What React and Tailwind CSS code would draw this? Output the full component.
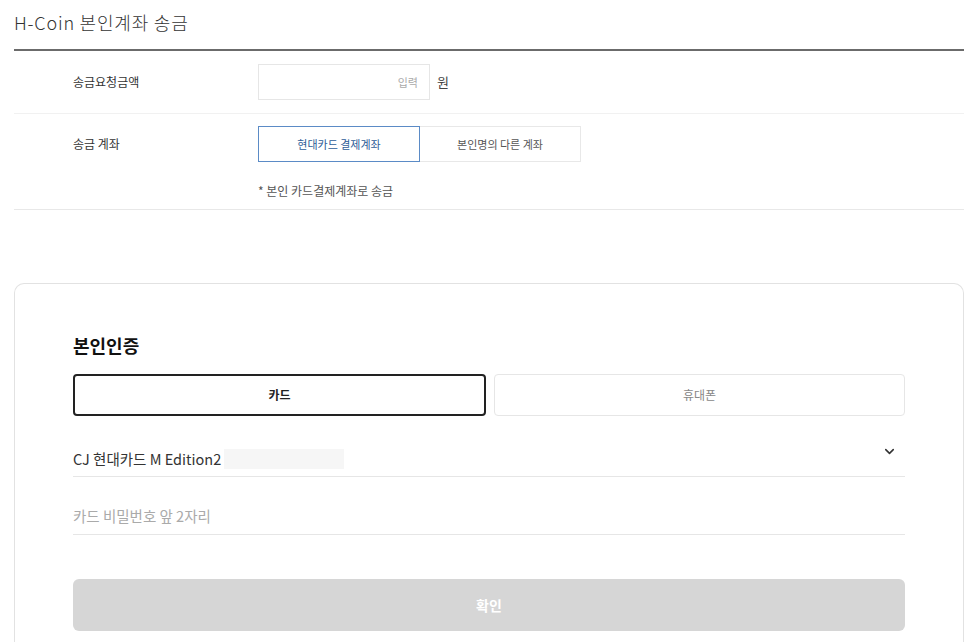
import { ChevronDown } from "lucide-react";

const font = { fontFamily: '"Noto Sans CJK KR", "Noto Sans", sans-serif' };

export default function App() {
  return (
    <div className="flex h-[642px] flex-col overflow-hidden bg-white pl-[14px] text-[#333]" style={font}>
      {/* title */}
      <div className="flex h-[49px] items-center pb-[4px]">
        <h1 className="text-[18px] font-light tracking-[0.8px] text-[#333]">H-Coin 본인계좌 송금</h1>
      </div>
      <div className="h-[2px] bg-[#6b6b6b]" />

      {/* amount */}
      <div className="flex h-[63px] items-center border-b border-[#f1f1f1]">
        <div className="w-[244px] pl-[59px] text-[12px] text-[#333]">송금요청금액</div>
        <div className="flex h-[36px] w-[172px] items-center justify-end border border-[#e6e6e6] pr-[11px] text-[11px] text-[#aaa]">
          입력
        </div>
        <span className="ml-[7px] text-[13px] text-[#444]">원</span>
      </div>

      {/* account */}
      <div className="flex border-b border-[#e8e8e8] pb-[9px] pt-[12px]">
        <div className="flex h-[36px] w-[244px] items-center pl-[59px] text-[12px] text-[#333]">송금 계좌</div>
        <div>
          <div className="flex">
            <button className="flex h-[36px] w-[162px] items-center justify-center border border-[#5b8bc6] text-[11px] text-[#2e5d98]">
              현대카드 결제계좌
            </button>
            <button className="flex h-[36px] w-[161px] items-center justify-center border border-l-0 border-[#e8e8e8] text-[11px] text-[#555]">
              본인명의 다른 계좌
            </button>
          </div>
          <p className="mt-[20px] text-[12px] leading-[18px] text-[#555]">* 본인 카드결제계좌로 송금</p>
        </div>
      </div>

      {/* verification card */}
      <div className="mt-[73px] flex-1 rounded-tl-[10px] rounded-tr-[10px] border border-b-0 border-[#e2e2e2] px-[58px] pt-[48px]">
        <h2 className="text-[18px] font-bold text-[#111]">본인인증</h2>
        <div className="mt-[15px] flex gap-[8px]">
          <button className="flex h-[42px] flex-1 items-center justify-center rounded-[4px] border-2 border-[#222] text-[12px] font-bold text-[#222]">
            카드
          </button>
          <button className="flex h-[42px] flex-1 items-center justify-center rounded-[4px] border border-[#e6e6e6] text-[12px] text-[#888]">
            휴대폰
          </button>
        </div>

        <div className="flex h-[61px] items-end border-b border-[#e6e6e6] pb-[6px]">
          <span className="text-[14.5px] text-[#333]">CJ 현대카드 M Edition2</span>
          <span className="mb-[1px] ml-[3px] h-[20px] w-[120px] bg-[#f6f6f6]" />
          <ChevronDown className="mb-[11px] ml-auto mr-[8px] h-[15px] w-[15px] text-[#333]" strokeWidth={2.5} />
        </div>

        <div className="flex h-[58px] items-end border-b border-[#e6e6e6] pb-[7px]">
          <span className="text-[14.5px] text-[#aaa]">카드 비밀번호 앞 2자리</span>
        </div>

        <button className="mt-[44px] flex h-[52px] w-full items-center justify-center rounded-[6px] bg-[#d6d6d6] text-[14px] font-bold text-white">
          확인
        </button>
      </div>
    </div>
  );
}
